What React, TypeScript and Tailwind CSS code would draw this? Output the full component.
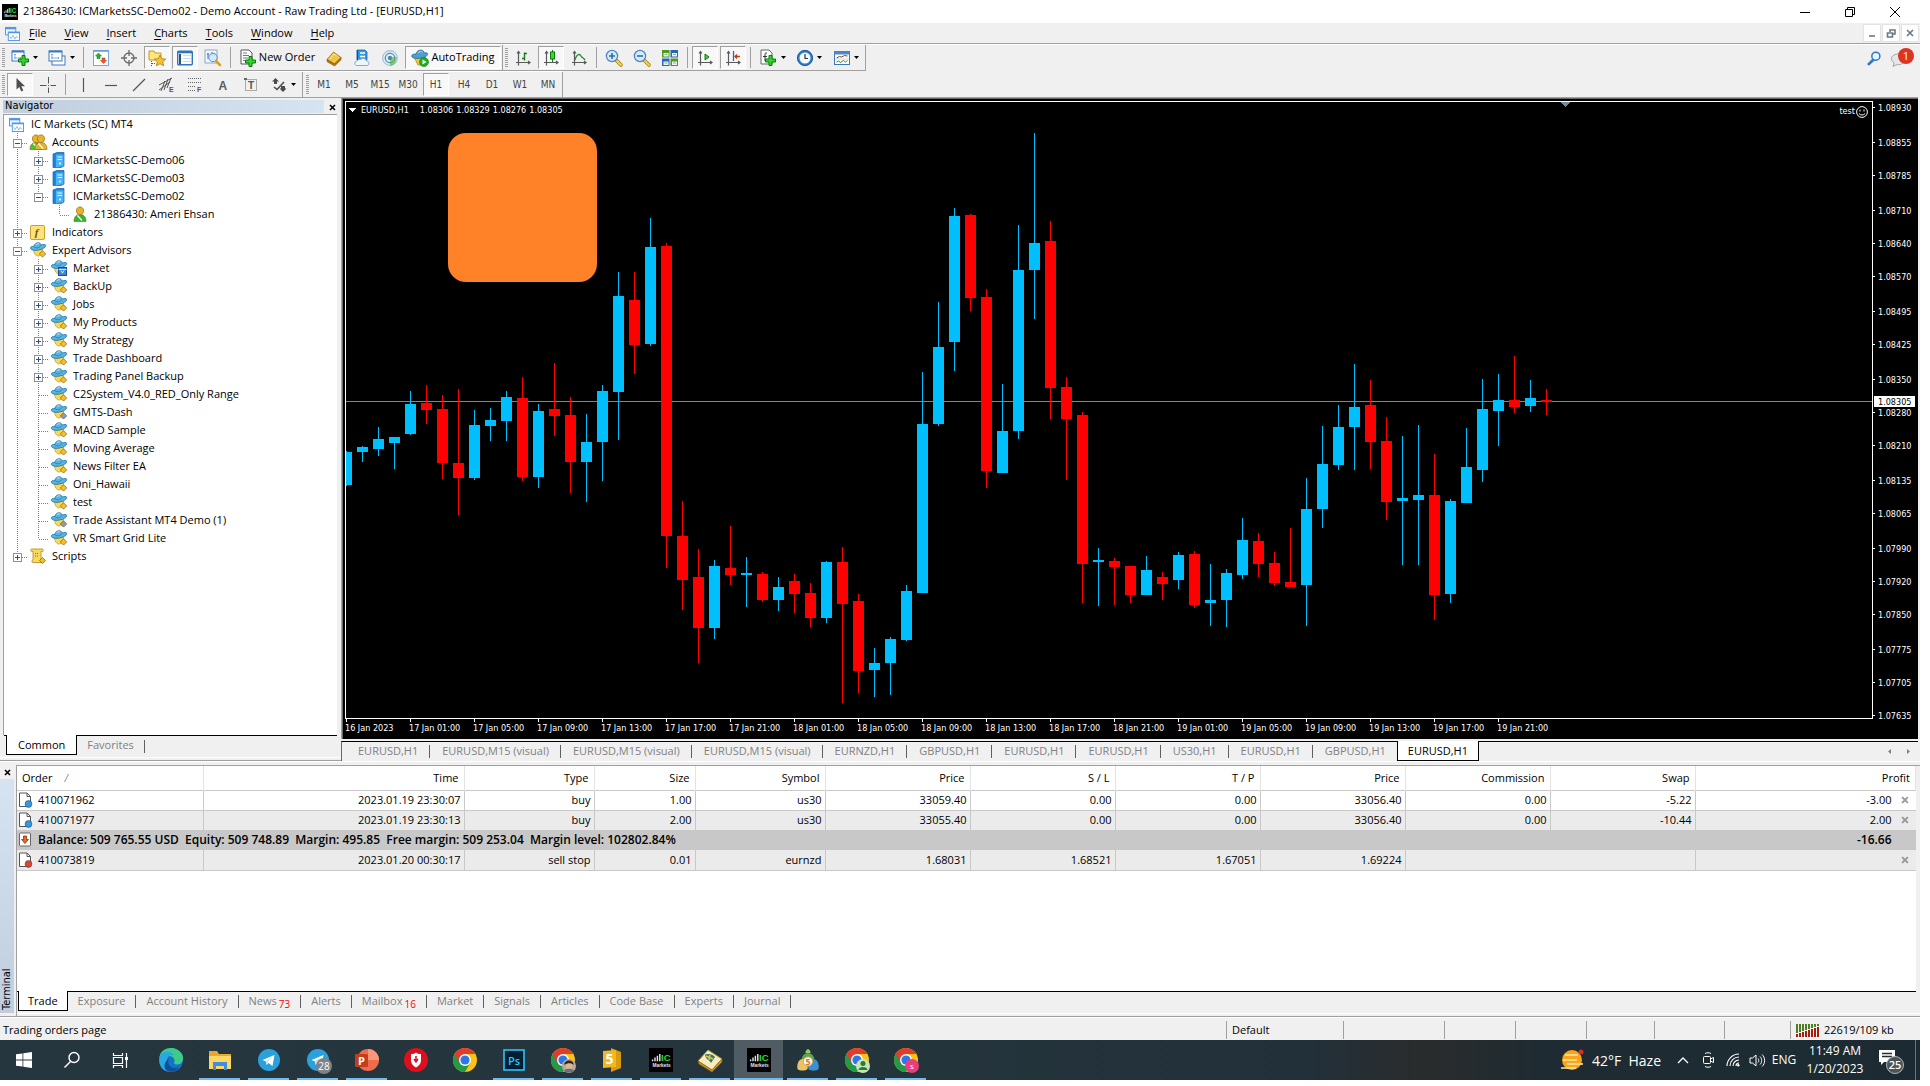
import React from "react";
import clsx from "clsx";

const UI = "font-['Open_Sans','Noto_Sans',sans-serif]";
const TAHOMA = "font-['DejaVu_Sans_Condensed','DejaVu_Sans',sans-serif]";

type IconProps = { children: React.ReactNode; size?: number; box?: number; className?: string };

const Icon = ({ children, size = 16, box = 16, className }: IconProps) => (
  <svg width={size} height={size} viewBox={`0 0 ${box} ${box}`} className={clsx("shrink-0 overflow-visible", className)} aria-hidden="true">
    {children}
  </svg>
);

const GreenPlus = ({ x = 5, y = 5 }: { x?: number; y?: number }) => (
  <path
    transform={`translate(${x} ${y})`}
    d="M4 .5h3V4h3.5v3H7v3.500H4V7H.5V4H4z"
    fill="#2fd52f"
    stroke="#0b7a0b"
    strokeWidth="1"
  />
);

const IcLogo = ({ size = 16 }: { size?: number }) => (
  <Icon size={size} box={20}>
    <rect width="20" height="20" fill="#000" />
    <path d="M3 9.500v1.500M5 8v3M7 6.500V11M9 5v6" stroke="#e5e5e5" strokeWidth="1.200" />
    <text x="10" y="11" fontSize="8" fontWeight="bold" fill="#1fdc2c" fontFamily="Liberation Sans">IC</text>
    <text x="3" y="16" fontSize="4" fontWeight="bold" fill="#e5e5e5" fontFamily="Liberation Sans">Markets</text>
  </Icon>
);

const WindowsIcon = ({ size = 15 }: { size?: number }) => (
  <Icon size={size}>
    <rect x=".5" y="1.500" width="11" height="8" fill="#eaf4ff" stroke="#4f96e8" />
    <path d="M.5 2.500h11" stroke="#4f96e8" strokeWidth="2" />
    <rect x="3.500" y="6.500" width="12" height="9" fill="#fff" stroke="#4f96e8" />
    <path d="M3.500 7h12" stroke="#4f96e8" strokeWidth="1.500" />
    <path d="M5 11l1.500 2.500L8.500 10l2 4 1.500-3 1.500 2" fill="none" stroke="#8ab6ee" />
  </Icon>
);

/* ---------- toolbar glyphs ---------- */

const NewChartIcon = () => (
  <Icon size={18} box={18}>
    <rect x="1" y="2" width="12" height="10" fill="#fff" stroke="#3f77bd" />
    <path d="M1 2.500h12" stroke="#3f77bd" strokeWidth="2" />
    <path d="M4 5v5M3 6l1-1 1 1M3 9h7M9 8l1 1-1 1" stroke="#6d9bd1" fill="none" strokeWidth=".8" />
    <GreenPlus x={7} y={6} />
  </Icon>
);
const ProfilesIcon = () => (
  <Icon size={18} box={18}>
    <rect x="4" y="7" width="13" height="9" fill="#fff" stroke="#3f77bd" />
    <rect x="1" y="2" width="13" height="10" fill="#fff" stroke="#3f77bd" />
    <path d="M1 2.500h13" stroke="#3f77bd" strokeWidth="2" />
    <path d="M4 5v5M3 6l1-1 1 1M3 9h8M10 8l1 1-1 1" stroke="#6d9bd1" fill="none" strokeWidth=".8" />
  </Icon>
);
const MarketWatchIcon = () => (
  <Icon>
    <rect x=".5" y=".5" width="15" height="15" fill="#fff" stroke="#7aa6da" />
    <path d="M.5 1h15" stroke="#5f9adf" strokeWidth="1.500" />
    <path d="M5.500 3l3 3H7v2.500H4V6H2.500z" fill="#21b821" stroke="#0b7a0b" strokeWidth=".5" />
    <path d="M10.500 13.500l3-3H12V8H9v2.500H7.500z" fill="#f0562a" stroke="#b1300f" strokeWidth=".5" />
  </Icon>
);
const TargetIcon = () => (
  <Icon>
    <circle cx="8" cy="8" r="5" fill="none" stroke="#6b6b6b" strokeWidth="1.300" />
    <path d="M8 0v6M8 10v6M0 8h6M10 8h6" stroke="#6b6b6b" strokeWidth="1.300" />
  </Icon>
);
const StarFolderIcon = () => (
  <Icon size={18} box={18}>
    <path d="M1 2h5l1 2h6v7H1z" fill="#ffe680" stroke="#c69a1d" />
    <path d="M3.500 12v5M4 14.500h4" stroke="#555" strokeDasharray="1 1" />
    <path d="M12 6l1.700 3.700 4 .4-3 2.700.9 4L12 14.700 8.400 16.800l.9-4-3-2.700 4-.4z" fill="#f7c331" stroke="#a97a10" strokeWidth=".8" />
  </Icon>
);
const PanelIcon = () => (
  <Icon>
    <rect x=".7" y="1.200" width="14.600" height="13.600" rx="1" fill="#fff" stroke="#2f74bd" strokeWidth="1.400" />
    <path d="M1 2.500h14" stroke="#2f74bd" strokeWidth="1.600" />
    <path d="M2 4h2v10H2z" fill="#26527f" />
    <path d="M6 5.500h8M6 8.500h8M6 11.500h8" stroke="#c4def5" />
  </Icon>
);
const TesterIcon = () => (
  <Icon size={18} box={18}>
    <rect x="1" y="1" width="12" height="13" fill="#eef5fc" stroke="#89aacb" />
    <path d="M4 4v6M3 5h2M8 3v4M10.500 4v3" stroke="#3a77b5" />
    <circle cx="9" cy="8.500" r="4.200" fill="#cfe6fb" fillOpacity=".85" stroke="#6a91b8" />
    <path d="M12 12l4 4" stroke="#d7a427" strokeWidth="2.600" strokeLinecap="round" />
  </Icon>
);
const NewOrderIcon = () => (
  <Icon size={18} box={18}>
    <path d="M2 1h8l3 3v11H2z" fill="#fff" stroke="#555" />
    <path d="M4 4h4M4 6.500h6M4 9h5M4 11.500h3" stroke="#777" />
    <GreenPlus x={6} y={7} />
  </Icon>
);
const BookIcon = () => (
  <Icon>
    <path d="M1 9.500L7.500 2 15 7.500 8.500 14z" fill="#f3c545" stroke="#9b6b10" strokeWidth=".8" />
    <path d="M1 9.500l.2 2.300L8.700 16 15 9.700V7.500L8.500 14z" fill="#b9780e" stroke="#7c4f07" strokeWidth=".6" />
    <path d="M4 9l4-5 3 2" stroke="#ffe9a3" fill="none" />
  </Icon>
);
const CloudServerIcon = () => (
  <Icon>
    <path d="M3 0h8l2 2v8H3z" fill="#2f9bea" stroke="#1668b4" strokeWidth=".8" />
    <path d="M3.500 0v10" stroke="#0f4f92" strokeWidth="1.200" />
    <path d="M6 3h5M6 6.500h5" stroke="#fff" strokeWidth="1.400" />
    <path d="M2.500 15.500a2.300 2.300 0 01.5-4.500 3 3 0 013.500-1.500 3.500 3.500 0 016 1.500 2.300 2.300 0 01.8 4.500z" fill="#eef5fb" stroke="#7ba3cc" strokeWidth=".9" />
  </Icon>
);
const SignalIcon = () => (
  <Icon>
    <path d="M5 14.500A7 7 0 115 1.500" fill="none" stroke="#9cc3de" strokeWidth="0" />
    <circle cx="8" cy="8" r="7.300" fill="none" stroke="#9cc3de" strokeWidth="1.200" />
    <circle cx="8" cy="8" r="4.700" fill="none" stroke="#4f94c8" strokeWidth="1.400" />
    <circle cx="8" cy="8" r="2.200" fill="#3c86c2" />
    <path d="M8 7v9c5-1 7-5 6.500-9z" fill="#55b03a" opacity=".6" />
  </Icon>
);
const AutoTradingIcon = () => (
  <Icon size={18} box={18}>
    <path d="M3 8h11l-3 8H7z" fill="#f5c431" stroke="#b7861a" strokeWidth=".8" />
    <path d="M1 8c-1-3 2-3 4-3C6 0 13 0 13 4c2-.5 4-.5 3.500 1.500C16 9 4 11 1 8z" fill="#4c9fd0" stroke="#236d9b" strokeWidth=".8" />
    <path d="M7 4c1-2 4-2 4.500-.5" fill="none" stroke="#bfe4f6" />
    <circle cx="13" cy="13" r="4.500" fill="#1fae1f" stroke="#0b7a0b" strokeWidth=".6" />
    <path d="M11.500 10.500v5l4-2.500z" fill="#fff" />
  </Icon>
);
const Axes = () => <path d="M3.500 2v13.500M1 12.500h14M2 3.500l1.500-2 1.500 2M13 11l2 1.500-2 1.500" stroke="#5a5a5a" strokeWidth="1.200" fill="none" />;
const BarChartIcon = () => (
  <Icon><Axes /><path d="M9.500 2.500v8M7 8.500h2.500M9.500 3.500H12" stroke="#1c7a1c" strokeWidth="1.400" /></Icon>
);
const CandleIcon = () => (
  <Icon>
    <Axes />
    <path d="M9.500 0v12" stroke="#0b7a0b" />
    <rect x="7.500" y="2" width="4" height="7" fill="#3fd53f" stroke="#0b7a0b" />
  </Icon>
);
const LineIcon = () => (
  <Icon><Axes /><path d="M4 10c2-7 5-6 6-4s3 2 4 4" stroke="#2c8c2c" strokeWidth="1.300" fill="none" /></Icon>
);
const ZoomIcon = ({ plus }: { plus?: boolean }) => (
  <Icon size={18} box={18}>
    <path d="M11 11l5 5" stroke="#a97a10" strokeWidth="3.600" strokeLinecap="round" />
    <path d="M11 11l5 5" stroke="#f4cf52" strokeWidth="2.200" strokeLinecap="round" />
    <circle cx="7" cy="7" r="5.600" fill="#d4eafb" stroke="#4a86bf" strokeWidth="1.300" />
    <path d={plus ? "M7 4v6M4 7h6" : "M4 7h6"} stroke="#2f6da8" strokeWidth="1.600" />
  </Icon>
);
const TilesIcon = () => (
  <Icon>
    <path d="M0 0h7.500v7.500H0zM8.500 8.500H16V16H8.500z" fill="#4f9a1c" />
    <path d="M8.500 0H16v7.500H8.500zM0 8.500h7.500V16H0z" fill="#2767b8" />
    <path d="M1.500 3h5v3.500h-5zM10 3h5v3.500h-5zM1.500 11.500h5V15h-5zM10 11.500h5V15h-5z" fill="#eef5ff" />
    <path d="M2.500 4.500h3M11 4.500h3M2.500 13h3M11 13h3" stroke="#8bb37a" />
  </Icon>
);
const ScrollIcon = () => (
  <Icon><Axes /><path d="M8 4l4 3-4 3z" fill="#3fd53f" stroke="#0b7a0b" /></Icon>
);
const ShiftIcon = () => (
  <Icon><Axes /><path d="M8.500 1v10" stroke="#2767b8" strokeWidth="1.300" /><path d="M15 6.500H10M12 4.500l-2 2 2 2" stroke="#b5400f" strokeWidth="1.300" fill="none" /></Icon>
);
const IndicatorsIcon = () => (
  <Icon size={18} box={18}>
    <path d="M2 1h8l3 3v11H2z" fill="#fff" stroke="#666" />
    <path d="M8 4c-2-.5-2 1-2 2v6M4 7.500h4" stroke="#333" fill="none" />
    <GreenPlus x={6} y={6} />
  </Icon>
);
const ClockIcon = () => (
  <Icon>
    <circle cx="8" cy="8" r="6.700" fill="#f3f9ff" stroke="#2f7fd0" strokeWidth="2.400" />
    <circle cx="8" cy="8" r="7.600" fill="none" stroke="#164b88" strokeWidth=".8" />
    <path d="M8 4v4.500h3" stroke="#333" fill="none" strokeWidth="1.200" />
  </Icon>
);
const TemplateIcon = () => (
  <Icon>
    <rect x=".5" y="1.500" width="15" height="13" fill="#fff" stroke="#3f77bd" />
    <path d="M.5 3h15" stroke="#4a88d0" strokeWidth="3" />
    <path d="M2.500 8l3-1.500 2 .5 3-1.500 3 .5" stroke="#9c3b16" fill="none" />
    <path d="M2.500 12l2-1 2 1.500 3-2 2 1.500 2-1.500" stroke="#2c8c2c" fill="none" />
    <path d="M1 9h14" stroke="#c5d9ef" />
  </Icon>
);

const CursorIcon = () => (
  <Icon><path d="M4.500 1v11.500l2.800-2.600 2 4.600 2-1-2-4.300h3.700z" fill="#4d4d4d" /></Icon>
);
const CrosshairIcon = () => (
  <Icon><path d="M8.500 0v6.500M8.500 10.500V16M0 8.500h6.500M10.500 8.500H16" stroke="#555" /><path d="M8 8h1v1H8z" fill="#555" /></Icon>
);
const VLineIcon = () => <Icon><path d="M8.500 1v14" stroke="#555" strokeWidth="1.200" /></Icon>;
const HLineIcon = () => <Icon><path d="M2 8.500h12" stroke="#555" strokeWidth="1.200" /></Icon>;
const TrendIcon = () => <Icon><path d="M2 14L14 2" stroke="#555" strokeWidth="1.200" /></Icon>;
const ChannelIcon = () => (
  <Icon>
    <path d="M0 8l13-7M0 13l11-8M2 14L6 4M5 13L9 2M8 11l4-10" stroke="#555" fill="none" />
    <text x="10" y="15" fontSize="7" fontWeight="bold" fill="#555" fontFamily="Liberation Sans">E</text>
  </Icon>
);
const FiboIcon = () => (
  <Icon>
    <path d="M1 1.500h14M1 5.500h14M1 9.500h8M1 13.500h8" stroke="#666" strokeDasharray="1 1" />
    <text x="10" y="15" fontSize="7" fontWeight="bold" fill="#555" fontFamily="Liberation Sans">F</text>
  </Icon>
);
const TextIcon = () => (
  <Icon><text x="3.500" y="13" fontSize="12" fontWeight="bold" fill="#5a5a5a" fontFamily="Liberation Sans">A</text></Icon>
);
const LabelIcon = () => (
  <Icon>
    <rect x="2.500" y="2.500" width="11" height="11" fill="none" stroke="#666" strokeDasharray="1 1" />
    <path d="M1 1h3v2H1z" fill="#666" />
    <text x="5" y="12" fontSize="10" fontWeight="bold" fill="#555" fontFamily="Liberation Sans">T</text>
  </Icon>
);
const ArrowsIcon = () => (
  <Icon>
    <path d="M4.500 1L8 4.500H6V7H3V4.500H1zM12 15l-3.500-3.500H10V9h4v2.500h1.500z" fill="#4d4d4d" />
    <path d="M3 10l3 2.500L13 5" stroke="#4d4d4d" strokeWidth="1.600" fill="none" />
  </Icon>
);

/* ---------- toolbar parts ---------- */

const Caret = () => (
  <svg width="5" height="3" viewBox="0 0 5 3" className="shrink-0" aria-hidden="true"><path d="M0 0h5L2.500 3z" fill="#000" /></svg>
);

const Grip = () => (
  <div className="my-[3px] mr-px ml-[2px] w-[3px] self-stretch bg-[repeating-linear-gradient(#a0a0a0_0_1px,#f0f0f0_1px_2px)]" />
);

const Sep = () => (
  <div className="flex w-[7px] justify-center self-stretch py-[2px]"><div className="w-px bg-[#a0a0a0]" /></div>
);

type ToolProps = { label: string; pressed?: boolean; wide?: boolean; className?: string; children: React.ReactNode };

const Tool = ({ label, pressed, wide, className, children }: ToolProps) => (
  <button
    aria-label={label}
    aria-pressed={pressed}
    className={clsx(
      "mx-px my-px flex items-center justify-center self-stretch border",
      !wide && "w-[26px]",
      pressed ? "border-t-[#a0a0a0] border-l-[#a0a0a0] border-r-white border-b-white bg-[#f8f8f8]" : "border-transparent",
      className,
    )}
  >
    {children}
  </button>
);

const DropTool = ({ label, children }: { label: string; children: React.ReactNode }) => (
  <button aria-label={label} className="flex w-[37px] items-center justify-center gap-[4px]">
    {children}
    <Caret />
  </button>
);

const Group = ({ children }: { children: React.ReactNode }) => (
  <div className="flex h-[26px] items-center border-r border-b border-[#a0a0a0]">{children}</div>
);

const frames = ["M1", "M5", "M15", "M30", "H1", "H4", "D1", "W1", "MN"];

const Toolbars = () => (
  <div className="flex items-start justify-between border-t border-white">
    <div className="flex flex-col items-start">
      <div className="flex">
        <Group>
          <Grip />
          <DropTool label="New chart"><NewChartIcon /></DropTool>
          <DropTool label="Profiles"><ProfilesIcon /></DropTool>
          <Sep />
          <Tool label="Market Watch"><MarketWatchIcon /></Tool>
          <Tool label="Data Window"><TargetIcon /></Tool>
          <Tool label="Navigator" pressed><StarFolderIcon /></Tool>
          <Tool label="Terminal" pressed><PanelIcon /></Tool>
          <Tool label="Strategy Tester"><TesterIcon /></Tool>
          <Sep />
          <Tool label="New Order" wide className="w-[84px] gap-[2px] text-[11px]"><NewOrderIcon />New Order</Tool>
          <Tool label="MetaEditor"><BookIcon /></Tool>
          <Tool label="Virtual hosting"><CloudServerIcon /></Tool>
          <Tool label="Signals"><SignalIcon /></Tool>
          <Tool label="AutoTrading" wide pressed className="w-[96px] gap-[2px] text-[11px]"><AutoTradingIcon />AutoTrading</Tool>
        </Group>
        <Group>
          <Grip />
          <Tool label="Bar chart"><BarChartIcon /></Tool>
          <Tool label="Candlesticks" pressed><CandleIcon /></Tool>
          <Tool label="Line chart"><LineIcon /></Tool>
          <Sep />
          <Tool label="Zoom in"><ZoomIcon plus /></Tool>
          <Tool label="Zoom out"><ZoomIcon /></Tool>
          <Tool label="Tile windows"><TilesIcon /></Tool>
          <Sep />
          <Tool label="Auto scroll" pressed><ScrollIcon /></Tool>
          <Tool label="Chart shift" pressed><ShiftIcon /></Tool>
          <Sep />
          <DropTool label="Indicators"><IndicatorsIcon /></DropTool>
          <DropTool label="Periods"><ClockIcon /></DropTool>
          <DropTool label="Templates"><TemplateIcon /></DropTool>
        </Group>
      </div>
      <div className="flex border-t border-white">
        <div className="flex h-[25px] items-center border-r border-[#a0a0a0]">
          <Grip />
          <Tool label="Cursor" pressed><CursorIcon /></Tool>
          <Tool label="Crosshair"><CrosshairIcon /></Tool>
          <Sep />
          <Tool label="Vertical line"><VLineIcon /></Tool>
          <Tool label="Horizontal line"><HLineIcon /></Tool>
          <Tool label="Trendline"><TrendIcon /></Tool>
          <Tool label="Equidistant channel"><ChannelIcon /></Tool>
          <Tool label="Fibonacci"><FiboIcon /></Tool>
          <Tool label="Text"><TextIcon /></Tool>
          <Tool label="Text label"><LabelIcon /></Tool>
          <DropTool label="Arrows"><ArrowsIcon /></DropTool>
        </div>
        <div className={clsx("flex h-[25px] items-center border-r border-[#a0a0a0] pl-px text-[10px] text-[#444]", TAHOMA)}>
          <Grip />
          {frames.map((f) => (
            <Tool key={f} label={f} pressed={f === "H1"}>{f}</Tool>
          ))}
        </div>
      </div>
    </div>
    <div className="flex items-center gap-2 pt-[2px] pr-[5px]">
      <button aria-label="Search">
        <Icon size={15}>
          <path d="M8 9L3 14" stroke="#2a78d0" strokeWidth="3" strokeLinecap="round" />
          <circle cx="10.500" cy="5.500" r="4.300" fill="#eaf5ff" stroke="#2a78d0" strokeWidth="1.600" />
        </Icon>
      </button>
      <button aria-label="Messages">
        <svg width="26" height="22" viewBox="0 0 26 22" aria-hidden="true">
          <path d="M4 19.500l1-3.500C-.5 11 4 7 9 7s8 4 6 7.500S9 18 8 17.500z" fill="#e3e6ea" stroke="#a3a8ad" />
          <circle cx="17" cy="9" r="8" fill="#dd3322" />
          <text x="17" y="13" fontSize="11" textAnchor="middle" fill="#fff" fontFamily="Open Sans">1</text>
        </svg>
      </button>
    </div>
  </div>
);

/* ---------- title bar and menu ---------- */

const TitleBar = () => (
  <header className="flex h-[23px] items-center justify-between bg-white">
    <div className="flex items-center gap-[5px] pl-[2px]">
      <IcLogo size={16} />
      <h1 className="text-[11px]">21386430: ICMarketsSC-Demo02 - Demo Account - Raw Trading Ltd - [EURUSD,H1]</h1>
    </div>
    <div className="flex pr-[3px]">
      <button aria-label="Minimize" className="flex w-[45px] justify-center"><Icon size={12} box={12}><path d="M1 6.500h10" stroke="#000" /></Icon></button>
      <button aria-label="Restore" className="flex w-[45px] justify-center">
        <Icon size={12} box={12}><path d="M1.500 3.500h7v7h-7zM3.500 3.500v-2h7v7h-2" fill="none" stroke="#000" /></Icon>
      </button>
      <button aria-label="Close" className="flex w-[45px] justify-center"><Icon size={12} box={12}><path d="M1 1l10 10M11 1L1 11" stroke="#000" /></Icon></button>
    </div>
  </header>
);

const menus = ["File", "View", "Insert", "Charts", "Tools", "Window", "Help"];

const mdiGlyphs = [
  { label: "Minimize chart", d: "M2 8h6" },
  { label: "Restore chart", d: "M1.500 5h5v4h-5zM4 4V2h5v4H7" },
  { label: "Close chart", d: "M2 2l6 6M8 2L2 8" },
];

const MenuBar = () => (
  <nav className="flex h-[21px] items-center justify-between border-b border-[#a0a0a0] pr-px">
    <div className="flex items-center pl-[5px]">
      <WindowsIcon />
      {menus.map((m) => (
        <button key={m} className="px-[9px] text-[11px]">
          <span className="underline underline-offset-2">{m[0]}</span>
          {m.slice(1)}
        </button>
      ))}
    </div>
    <div className="flex gap-px">
      {mdiGlyphs.map((g) => (
        <button key={g.label} aria-label={g.label} className="flex h-[18px] w-[18px] items-center justify-center border border-[#e3e3e3] bg-white">
          <Icon size={10} box={10}><path d={g.d} fill="none" stroke="#66788c" strokeWidth="1.600" /></Icon>
        </button>
      ))}
    </div>
  </nav>
);

/* ---------- navigator ---------- */

const UserShape = ({ x = 0, body }: { x?: number; body: string }) => (
  <g transform={`translate(${x} 0)`}>
    <path d="M0 15.500c0-4 1.500-7 6-7s6 3 6 7z" fill={body} stroke="#7a6a10" strokeWidth=".6" />
    <path d="M2.500 5c-.5-5.500 7.500-5.500 7 0 0 5-7 5-7 0z" fill="#e7b32a" stroke="#94690b" strokeWidth=".7" />
    <path d="M3.500 9.500l4.500 5" stroke="#fff" strokeWidth="1.300" />
  </g>
);

const AccountsIcon = () => (
  <Icon size={17} box={17}><UserShape body="#4cc22c" /><UserShape x={5} body="#e7b32a" /></Icon>
);
const ServerIcon = () => (
  <Icon>
    <path d="M2 2l4-1.500h7V14l-3 1.500H2z" fill="#1c86dc" stroke="#0f62a8" strokeWidth=".7" />
    <path d="M5 2.500h7.500V14L5 15.500z" fill="#4cb4f4" />
    <path d="M6.500 5h4.500M6.500 7.500h4.500" stroke="#e9f7ff" strokeWidth="1.200" />
    <circle cx="9" cy="11.500" r="1" fill="#fff" />
  </Icon>
);
const UserIcon = () => <Icon><g transform="translate(2 0)"><UserShape body="#2fb82f" /></g></Icon>;
const FunctionIcon = () => (
  <Icon size={15}>
    <rect x=".5" y=".5" width="15" height="15" rx="1.500" fill="#ffe27a" stroke="#c39a1b" />
    <text x="5" y="12" fontSize="12" fontStyle="italic" fontWeight="bold" fill="#6d5208" fontFamily="Liberation Serif">f</text>
  </Icon>
);
const ExpertIcon = ({ gray, bag }: { gray?: boolean; bag?: boolean }) => (
  <Icon>
    <path d="M3.500 7h9c.5 4-2 7-4.500 7s-4.500-3-4.500-7z" fill="#fbd850" stroke="#c09518" strokeWidth=".7" />
    <path d="M.3 6.500C0 4.500 2.500 4.300 4 4.300 4.500 0 10.500-.5 11 3c2-.6 4.800-1 4.700.6C15.500 7.500 2.500 10.500.3 6.500z" fill="#58b4e2" stroke="#20709f" strokeWidth=".8" />
    <path d="M4 4.800c2 1.800 5.500 1 7-1.300" stroke="#20709f" strokeWidth=".7" fill="none" />
    <path d="M6 2.800c.8-1.300 2.500-1.300 3-.6" stroke="#c8eafa" fill="none" />
    {bag ? (
      <g><rect x="7.500" y="7.500" width="8" height="8" fill="#3d86dd" stroke="#17509a" /><path d="M10 10.500l1.500 2.500 1.500-2.500M7.500 9.500h8" stroke="#fff" strokeWidth=".8" fill="none" /></g>
    ) : (
      <path d="M12.500 8.700l3.200 3.200-3.200 3.200-3.200-3.200z" fill={gray ? "#9a9a9a" : "#f2c033"} stroke={gray ? "#5f5f5f" : "#92690c"} strokeWidth=".8" />
    )}
  </Icon>
);
const ScriptIcon = () => (
  <Icon>
    <path d="M1.500 1h11c1 0 1 2.500 0 2.500H11V12h2v2.500H3c-1.500 0-1.500-2.500 0-2.500V3.500H1.500C.5 3.500.5 1 1.500 1z" fill="#f8d95f" stroke="#b08a16" strokeWidth=".8" />
    <path d="M5 5.500h4M5 8h4" stroke="#8e6e0e" strokeDasharray="1 1" />
    <path d="M12.500 9.500l3 3-3 3-3-3z" fill="#f2c033" stroke="#92690c" strokeWidth=".8" />
  </Icon>
);

// guides holds one character per column: "|" line, "L" last elbow, "T" branch, " " blank
type Row = { label: string; guides: string; box?: "+" | "-"; icon: React.ReactNode };

const rows: Row[] = [
  { label: "IC Markets (SC) MT4", guides: "", icon: <WindowsIcon size={15} /> },
  { label: "Accounts", guides: "T", box: "-", icon: <AccountsIcon /> },
  { label: "ICMarketsSC-Demo06", guides: "|T", box: "+", icon: <ServerIcon /> },
  { label: "ICMarketsSC-Demo03", guides: "|T", box: "+", icon: <ServerIcon /> },
  { label: "ICMarketsSC-Demo02", guides: "|L", box: "-", icon: <ServerIcon /> },
  { label: "21386430: Ameri Ehsan", guides: "| L", icon: <UserIcon /> },
  { label: "Indicators", guides: "T", box: "+", icon: <FunctionIcon /> },
  { label: "Expert Advisors", guides: "T", box: "-", icon: <ExpertIcon /> },
  { label: "Market", guides: "|T", box: "+", icon: <ExpertIcon bag /> },
  { label: "BackUp", guides: "|T", box: "+", icon: <ExpertIcon /> },
  { label: "Jobs", guides: "|T", box: "+", icon: <ExpertIcon /> },
  { label: "My Products", guides: "|T", box: "+", icon: <ExpertIcon /> },
  { label: "My Strategy", guides: "|T", box: "+", icon: <ExpertIcon /> },
  { label: "Trade Dashboard", guides: "|T", box: "+", icon: <ExpertIcon /> },
  { label: "Trading Panel Backup", guides: "|T", box: "+", icon: <ExpertIcon /> },
  { label: "C2System_V4.0_RED_Only Range", guides: "|T", icon: <ExpertIcon /> },
  { label: "GMTS-Dash", guides: "|T", icon: <ExpertIcon gray /> },
  { label: "MACD Sample", guides: "|T", icon: <ExpertIcon /> },
  { label: "Moving Average", guides: "|T", icon: <ExpertIcon /> },
  { label: "News Filter EA", guides: "|T", icon: <ExpertIcon /> },
  { label: "Oni_Hawaii", guides: "|T", icon: <ExpertIcon /> },
  { label: "test", guides: "|T", icon: <ExpertIcon /> },
  { label: "Trade Assistant MT4 Demo (1)", guides: "|T", icon: <ExpertIcon gray /> },
  { label: "VR Smart Grid Lite", guides: "|L", icon: <ExpertIcon /> },
  { label: "Scripts", guides: "L", box: "+", icon: <ScriptIcon /> },
];

const Guide = ({ kind, box }: { kind: string; box?: string }) => (
  <svg width="21" height="18" viewBox="0 0 21 18" className="shrink-0" aria-hidden="true">
    {kind !== " " && <path d={kind === "L" ? "M10.500 0v10" : "M10.500 0v18"} stroke="#808080" strokeDasharray="1 1" />}
    {(kind === "T" || kind === "L") && <path d="M11 10.500h10" stroke="#808080" strokeDasharray="1 1" />}
    {box && (
      <g>
        <rect x="6.500" y="6.500" width="8" height="8" fill="#fff" stroke="#919191" />
        <path d={box === "+" ? "M8 10.500h5M10.500 8v5" : "M8 10.500h5"} stroke="#2b4f9e" />
      </g>
    )}
  </svg>
);

const Navigator = () => (
  <aside className="flex w-[341px] shrink-0 flex-col border-t border-[#a0a0a0] pt-[2px]">
    <div className="flex h-[14px] items-start pr-px pl-[3px]">
      <h2 className={clsx("flex-1 bg-linear-to-r from-[#bfcddd] to-[#d6e4f2] pb-px pl-[2px] text-[11px] leading-[12px]", TAHOMA)}>Navigator</h2>
      <button aria-label="Close navigator" className="flex h-[14px] w-[16px] items-center justify-center">
        <Icon size={7} box={7}><path d="M1 1l5 5M6 1L1 6" stroke="#000" strokeWidth="1.600" /></Icon>
      </button>
    </div>
    <ul className="mr-[4px] ml-[3px] flex-1 border-t border-l border-[#a0a0a0] bg-white pl-[3px] text-[11px]">
      {rows.map((r) => (
        <li key={r.label} className="flex h-[18px] items-center leading-[18px]">
          {r.guides.split("").map((g, i) => (
            <Guide key={i} kind={g} box={i === r.guides.length - 1 ? r.box : undefined} />
          ))}
          <span className="flex w-[24px] shrink-0 pl-[2px]">{r.icon}</span>
          {r.label}
        </li>
      ))}
    </ul>
    <div className="mr-[4px] ml-[4px] flex h-[22px] items-start border-t border-black pl-[2px] text-[11px]">
      <button className="-mt-px h-[20px] border border-t-0 border-black bg-white px-[11px] leading-[18px]">Common</button>
      <button className="px-[10px] leading-[18px] text-[#808080]">Favorites</button>
      <span className="mt-[4px] h-[13px] w-px bg-[#606060]" />
    </div>
    <div className="h-[4px] border-t border-b border-t-white border-b-[#a0a0a0]" />
  </aside>
);

/* ---------- chart ---------- */

const PLOT_TOP = 102;
const STEP = 16;
const UP = "#00bfff";
const DOWN = "#ff0000";

// direction, high, body top, body bottom, low (window rows)
const candles: [string, number, number, number, number][] = [
  ["u", 451, 452, 485, 486], ["u", 446, 447, 452, 462], ["u", 427, 439, 449, 456], ["u", 437, 437, 443, 469],
  ["u", 391, 404, 434, 435], ["d", 385, 403, 410, 424], ["d", 395, 409, 463, 479], ["d", 389, 463, 478, 515],
  ["u", 410, 425, 478, 480], ["u", 408, 420, 426, 441], ["u", 391, 397, 421, 441], ["d", 377, 398, 477, 481],
  ["u", 404, 411, 477, 488], ["d", 363, 409, 416, 436], ["d", 397, 415, 462, 493], ["u", 414, 442, 462, 502],
  ["u", 385, 391, 442, 481], ["u", 272, 296, 392, 440], ["d", 272, 300, 345, 374], ["u", 218, 247, 344, 346],
  ["d", 243, 246, 536, 568], ["d", 501, 536, 580, 610], ["d", 549, 577, 628, 663], ["u", 560, 566, 628, 639],
  ["d", 526, 568, 575, 585], ["u", 557, 573, 575, 607], ["d", 572, 574, 600, 602], ["u", 577, 587, 600, 611],
  ["d", 574, 581, 594, 613], ["d", 583, 593, 618, 627], ["u", 561, 562, 618, 623], ["d", 547, 562, 604, 703],
  ["d", 594, 601, 671, 693], ["u", 648, 663, 670, 697], ["u", 637, 639, 663, 695], ["u", 585, 591, 640, 641],
  ["u", 372, 424, 593, 593], ["u", 302, 347, 424, 426], ["u", 208, 216, 342, 371], ["d", 214, 215, 298, 311],
  ["d", 289, 297, 471, 488], ["u", 384, 431, 473, 473], ["u", 225, 270, 431, 439], ["u", 133, 243, 270, 319],
  ["d", 221, 241, 388, 419], ["d", 377, 387, 419, 480], ["d", 412, 415, 564, 603], ["u", 548, 560, 562, 606],
  ["d", 558, 561, 567, 605], ["d", 566, 566, 595, 603], ["u", 556, 570, 595, 595], ["d", 572, 577, 584, 600],
  ["u", 552, 555, 580, 589], ["d", 551, 554, 605, 608], ["u", 564, 600, 603, 626], ["u", 569, 573, 600, 627],
  ["u", 518, 540, 575, 579], ["d", 533, 541, 564, 577], ["d", 552, 563, 583, 586], ["d", 528, 582, 587, 587],
  ["u", 478, 509, 585, 626], ["u", 426, 464, 509, 528], ["u", 405, 427, 465, 470], ["u", 364, 407, 427, 470],
  ["d", 380, 405, 442, 469], ["d", 417, 441, 502, 520], ["u", 436, 498, 501, 565], ["u", 425, 495, 500, 565],
  ["d", 454, 495, 595, 620], ["u", 499, 501, 594, 603], ["u", 428, 467, 503, 503], ["u", 379, 409, 470, 482],
  ["u", 374, 400, 411, 446], ["d", 356, 400, 407, 413], ["u", 380, 398, 406, 412], ["d", 389, 400, 402, 415],
];

const prices = [
  108930, 108855, 108785, 108710, 108640, 108570, 108495, 108425, 108350, 108280,
  108210, 108135, 108065, 107990, 107920, 107850, 107775, 107705, 107635,
];

const times = [
  "16 Jan 2023", "17 Jan 01:00", "17 Jan 05:00", "17 Jan 09:00", "17 Jan 13:00", "17 Jan 17:00", "17 Jan 21:00",
  "18 Jan 01:00", "18 Jan 05:00", "18 Jan 09:00", "18 Jan 13:00", "18 Jan 17:00", "18 Jan 21:00",
  "19 Jan 01:00", "19 Jan 05:00", "19 Jan 09:00", "19 Jan 13:00", "19 Jan 17:00", "19 Jan 21:00",
];

const priceRow = (p: number) => Math.round(107 + (108930 - p) * 0.4695) - PLOT_TOP + 1;

const Chart = () => (
  <div className="border-t border-l border-[#a0a0a0]">
    <div className={clsx("grid grid-cols-[1fr_45px] border-t border-l border-[#696969] bg-black pt-[2px] pl-[2px] text-[9px] text-white", TAHOMA)}>
      <div className="relative h-[618px] overflow-hidden border border-white">
        <svg width="100%" height="616" className="block" shapeRendering="crispEdges" role="img" aria-label="EURUSD hourly candles">
          <rect x="0" y={401 - PLOT_TOP} width="100%" height="1" fill="#778899" />
          {candles.map(([dir, high, top, bottom, low], i) => (
            <g key={i} fill={dir === "u" ? UP : DOWN}>
              <rect x={i * STEP} y={high - PLOT_TOP} width="1" height={low - high} />
              <rect x={i * STEP - 5} y={top - PLOT_TOP} width="11" height={bottom - top} />
            </g>
          ))}
          <path d="M1214 0h11l-5.500 5z" fill="#778899" />
          <path d="M3 6h7l-3.500 4z" fill="#fff" />
        </svg>
        <p className="absolute top-[2px] left-[15px] flex gap-[11px] whitespace-pre">
          <span>EURUSD,H1</span>
          <span className="flex gap-[3px]">
            <span>1.08306</span>
            <span>1.08329</span>
            <span>1.08276</span>
            <span>1.08305</span>
          </span>
        </p>
        <div className="absolute top-[31px] left-[102px] h-[149px] w-[149px] rounded-[18px] bg-[#ff8228]" />
        <p className="absolute top-[3px] right-[4px] flex items-center gap-px">
          test
          <Icon size={12} box={12}>
            <circle cx="6" cy="6" r="5.400" fill="none" stroke="#fff" />
            <path d="M4 3.500v2M8 3.500v2M3 7.500c1.500 2 4.500 2 6 0" stroke="#fff" fill="none" />
          </Icon>
        </p>
      </div>
      <svg width="45" height="618" className="block overflow-visible" fill="#fff">
        {prices.map((p) => (
          <g key={p}>
            <rect x="0" y={priceRow(p)} width="2" height="1" />
            <text x="5" y={priceRow(p) + 4}>{(p / 100000).toFixed(5)}</text>
          </g>
        ))}
        <rect x="1" y="295" width="41" height="11" />
        <text x="5" y="304" fill="#000">1.08305</text>
      </svg>
      <svg width="100%" height="20" className="col-span-2 block" fill="#fff">
        {times.map((t, i) => (
          <g key={t}>
            <rect x={i * 64 + 1} y="0" width="1" height="3" />
            <text x={i * 64} y="12">{t}</text>
          </g>
        ))}
      </svg>
    </div>
  </div>
);

const chartTabs = [
  "EURUSD,H1", "EURUSD,M15 (visual)", "EURUSD,M15 (visual)", "EURUSD,M15 (visual)", "EURNZD,H1", "GBPUSD,H1",
  "EURUSD,H1", "EURUSD,H1", "US30,H1", "EURUSD,H1", "GBPUSD,H1",
];

const ChartTabs = () => (
  <div className="mt-[2px] flex h-[20px] items-start border-t border-l border-t-black border-l-[#696969] pl-[4px] text-[11px] leading-[18px] text-[#808080]">
    {chartTabs.map((t, i) => (
      <button key={i} className="flex items-center">
        <span className="pr-[11px] pl-[12px]">{t}</span>
        {i < chartTabs.length - 1 && <span className="h-[13px] w-px bg-[#606060]" />}
      </button>
    ))}
    <button className="-mt-px h-[20px] border border-t-0 border-black bg-white px-[10px] text-black">EURUSD,H1</button>
    <div className="ml-auto flex gap-[14px] self-center pr-[7px]">
      <button aria-label="Scroll tabs left"><Icon size={5} box={5}><path d="M4 0v5L1 2.500z" fill="#808080" /></Icon></button>
      <button aria-label="Scroll tabs right"><Icon size={5} box={5}><path d="M1 0v5l3-2.500z" fill="#808080" /></Icon></button>
    </div>
  </div>
);

/* ---------- terminal ---------- */

const columns = ["Order", "Time", "Type", "Size", "Symbol", "Price", "S / L", "T / P", "Price", "Commission", "Swap", "Profit"];

const open = [
  ["410071962", "2023.01.19 23:30:07", "buy", "1.00", "us30", "33059.40", "0.00", "0.00", "33056.40", "0.00", "-5.22", "-3.00"],
  ["410071977", "2023.01.19 23:30:13", "buy", "2.00", "us30", "33055.40", "0.00", "0.00", "33056.40", "0.00", "-10.44", "2.00"],
];
const pending = ["410073819", "2023.01.20 00:30:17", "sell stop", "0.01", "eurnzd", "1.68031", "1.68521", "1.67051", "1.69224", "", "", ""];

const OrderIcon = ({ dot }: { dot: string }) => (
  <Icon>
    <path d="M1.500 1h7.500l3.500 3.500v10h-11z" fill="#fff" stroke="#555" />
    <path d="M9 1v3.500h3.500" fill="none" stroke="#555" />
    <circle cx="10.500" cy="12" r="3.400" fill={dot} stroke="#33445a" strokeWidth=".6" />
  </Icon>
);

const OrderRow = ({ cells, dot, shaded }: { cells: string[]; dot: string; shaded?: boolean }) => (
  <tr className={clsx("h-[20px] border-b border-[#c8c8c8]", shaded && "bg-[#ebebeb]")}>
    {cells.map((c, i) => {
      if (i === 0)
        return (
          <td key={i} className="border-r border-[#c8c8c8] pl-px">
            <span className="flex items-center gap-[4px]"><OrderIcon dot={dot} />{c}</span>
          </td>
        );
      if (i === 11)
        return (
          <td key={i}>
            <span className="flex items-center justify-end gap-[9px] pr-[7px]">
              {c}
              <button aria-label={`Close order ${cells[0]}`}>
                <Icon size={8} box={7}><path d="M1 1l5 5M6 1L1 6" stroke="#9a9a9a" strokeWidth="1.800" /></Icon>
              </button>
            </span>
          </td>
        );
      return (
        <td key={i} className={clsx("pr-[3px] text-right", !(i === 9 && c === "") && "border-r border-[#c8c8c8]")}>{c}</td>
      );
    })}
  </tr>
);

const terminalTabs: { name: string; count?: number }[] = [
  { name: "Exposure" }, { name: "Account History" }, { name: "News", count: 73 }, { name: "Alerts" },
  { name: "Mailbox", count: 16 }, { name: "Market" }, { name: "Signals" }, { name: "Articles" },
  { name: "Code Base" }, { name: "Experts" }, { name: "Journal" },
];

const Terminal = () => (
  <section className="flex flex-1 border-t border-white pt-[3px]">
    <div className="flex w-[16px] flex-col items-start">
      <button aria-label="Close terminal" className="flex h-[14px] w-[14px] items-center justify-center">
        <Icon size={7} box={7}><path d="M1 1l5 5M6 1L1 6" stroke="#000" strokeWidth="1.600" /></Icon>
      </button>
      <h2 className={clsx("mb-[3px] w-[14px] flex-1 rotate-180 bg-linear-to-b from-[#bfcddd] to-[#d6e4f2] pt-[3px] text-[11px] leading-[14px] [writing-mode:vertical-rl]", TAHOMA)}>
        Terminal
      </h2>
    </div>
    <div className="flex flex-1 flex-col border-t border-l border-[#a0a0a0]">
      <div className="mr-[4px] flex-1 bg-white">
        <table className="w-full table-fixed border-collapse text-[11px] leading-[16px]">
          <colgroup>
            <col className="w-[186px]" />
            <col className="w-[261px]" />
            <col className="w-[130px]" />
            <col className="w-[101px]" />
            <col className="w-[130px]" />
            <col span={6} className="w-[145px]" />
            <col />
          </colgroup>
          <thead>
            <tr className="h-[24px] border-b border-[#c8c8c8]">
              {columns.map((c, i) => (
                <th key={i} scope="col" className={clsx("border-r border-[#e3e3e3] font-normal", i === 0 ? "pl-[5px] text-left" : "pr-[5px] text-right")}>
                  {c}
                  {i === 0 && <span className="pl-[12px] text-[10px] text-[#808080] italic">/</span>}
                </th>
              ))}
            </tr>
          </thead>
          <tbody>
            {open.map((cells, i) => (
              <OrderRow key={cells[0]} cells={cells} dot="#2f9be8" shaded={i === 1} />
            ))}
            <tr className="h-[20px] bg-[#c8c8c8] text-[12px] font-semibold">
              <td colSpan={11} className="pl-px">
                <span className="flex items-center gap-[4px] whitespace-pre">
                  <Icon>
                    <rect x="1.500" y="1" width="11" height="13" rx="1" fill="#fff" stroke="#666" />
                    <path d="M5.500 4h3v3.500h2L7 11.500 3.500 7.500h2z" fill="#e2672b" stroke="#8e3208" strokeWidth=".8" />
                  </Icon>
                  Balance: 509 765.55 USD  Equity: 509 748.89  Margin: 495.85  Free margin: 509 253.04  Margin level: 102802.84%
                </span>
              </td>
              <td className="pr-[24px] text-right">-16.66</td>
            </tr>
            <OrderRow cells={pending} dot="#e0452c" shaded />
          </tbody>
        </table>
      </div>
      <div className="mr-[4px] flex h-[22px] items-start border-t border-black pl-px text-[11px] leading-[18px] text-[#808080]">
        <button className="-mt-px h-[20px] border border-t-0 border-black bg-white px-[9px] text-black">Trade</button>
        {terminalTabs.map((t) => (
          <button key={t.name} className="flex items-center">
            <span className="flex gap-[2px] px-[10px]">
              {t.name}
              {t.count && <span className="pt-[6px] text-[10px] leading-[12px] text-[#ff0000]">{t.count}</span>}
            </span>
            <span className="h-[13px] w-px bg-[#606060]" />
          </button>
        ))}
      </div>
      <div className="h-[3px] border-t border-white" />
    </div>
  </section>
);

const StatusBar = () => (
  <footer className="flex h-[24px] items-center border-t border-[#a0a0a0] pt-[3px] text-[11px] leading-[18px] shadow-[inset_0_1px_#fff]">
    <p className="flex-1 pl-[3px]">Trading orders page</p>
    <div className="flex h-[18px] w-[117px] border-l border-[#a0a0a0] pl-[5px]">Default</div>
    <div className="h-[18px] w-[101px] border-l border-[#a0a0a0]" />
    <div className="h-[18px] w-[71px] border-l border-[#a0a0a0]" />
    <div className="h-[18px] w-[71px] border-l border-[#a0a0a0]" />
    <div className="h-[18px] w-[68px] border-l border-[#a0a0a0]" />
    <div className="h-[18px] w-[70px] border-l border-[#a0a0a0]" />
    <div className="h-[18px] w-[66px] border-l border-[#a0a0a0]" />
    <div className="flex h-[18px] w-[130px] items-center gap-[4px] border-l border-[#a0a0a0] pl-[5px]">
      <svg width="24" height="13" viewBox="0 0 24 13" aria-hidden="true">
        {[0, 1, 2, 3, 4, 5, 6, 7].map((i) => (
          <g key={i}>
            <rect x={i * 3} y="0" width="2" height={9 - i} fill="#4d8020" />
            <rect x={i * 3} y={10 - i} width="2" height={3 + i} fill="#a01f10" />
          </g>
        ))}
      </svg>
      22619/109 kb
    </div>
  </footer>
);

/* ---------- windows taskbar ---------- */

const ChromeIcon = ({ children }: { children?: React.ReactNode }) => (
  <Icon size={28} box={28}>
    <circle cx="14" cy="14" r="12" fill="#fbc116" />
    <path d="M3.600 8A12 12 0 0014 26l5.200-9-5.200-3z" fill="#229a48" />
    <path d="M3.600 8A12 12 0 0124.400 8H14v6l-5.200 3z" fill="#e33b2e" />
    <circle cx="14" cy="14" r="6" fill="#fff" />
    <circle cx="14" cy="14" r="4.600" fill="#2f76e8" />
    {children}
  </Icon>
);

const TelegramIcon = ({ children }: { children?: React.ReactNode }) => (
  <Icon size={28} box={28}>
    <circle cx="14" cy="14" r="11" fill="#2aa1dd" />
    <path d="M7.500 14l12-5-2 11-4-3-2 2-.5-3.500z" fill="#fff" />
    <path d="M11 15.500l6-4.500-4.500 5.500-1 2.500z" fill="#bfe0f2" />
    {children}
  </Icon>
);

type Task = { label: string; icon: React.ReactNode; open?: boolean; active?: boolean };

const tasks: Task[] = [
  {
    label: "Edge",
    icon: (
      <Icon size={26} box={26}>
        <circle cx="13" cy="13" r="12" fill="#1473c8" />
        <path d="M1.500 10C3 2 12-1 19 2.500c6 3 7.500 9 5 12.500-2 3-6 3-8 1.500 2-4-1-7.500-5-7.500-4 0-7.500 0-9.500 1z" fill="#3ecb8a" />
        <path d="M1.500 10C4 4 12 3 16 8l-4 .5c-5 2.500-5 12.500 3 15.500C5 27 0 18 1.500 10z" fill="#2aa8e0" />
        <path d="M11 12c-3 6 3 11 10 8-3 5-9 6-13 3-3-4-1-9 3-11z" fill="#0c4f9a" />
      </Icon>
    ),
  },
  {
    label: "File Explorer", open: true,
    icon: (
      <Icon size={24} box={24}>
        <path d="M1 3h8l2 3h12v15H1z" fill="#e8a92b" />
        <path d="M1 8h22v13H1z" fill="#fcd667" />
        <path d="M5 14h14v8h-3v-4H8v4H5z" fill="#3e8fe0" />
      </Icon>
    ),
  },
  { label: "Telegram", open: true, icon: <TelegramIcon /> },
  {
    label: "Telegram work", open: true,
    icon: (
      <TelegramIcon>
        <circle cx="20" cy="20" r="8" fill="#7d8388" />
        <text x="20" y="24" fontSize="10" textAnchor="middle" fill="#fff" fontFamily="Open Sans">28</text>
      </TelegramIcon>
    ),
  },
  {
    label: "PowerPoint", open: true,
    icon: (
      <Icon size={26} box={26}>
        <circle cx="14" cy="13" r="11" fill="#ee6c4d" />
        <path d="M14 2a11 11 0 0111 11H14z" fill="#ff9678" />
        <rect x="1" y="7" width="13" height="13" rx="1" fill="#c43e1c" />
        <text x="4" y="17.500" fontSize="11" fontWeight="bold" fill="#fff" fontFamily="Open Sans">P</text>
      </Icon>
    ),
  },
  {
    label: "Antivirus",
    icon: (
      <Icon size={26} box={26}>
        <circle cx="13" cy="13" r="12" fill="#dd0f1c" />
        <path d="M8 7c2 0 4-.5 5-1.500C14 6.500 16 7 18 7v6c0 4-2.500 6-5 7.500C10.500 19 8 17 8 13z" fill="#fff" />
        <path d="M13 9v5M11 12l2 3 2-3" stroke="#dd0f1c" strokeWidth="1.500" fill="none" />
      </Icon>
    ),
  },
  { label: "Chrome", icon: <ChromeIcon /> },
  {
    label: "Photoshop", open: true,
    icon: (
      <Icon size={24} box={24}>
        <rect x="2" y="2" width="20" height="20" fill="#001d34" stroke="#2fc3f5" strokeWidth="1.600" />
        <text x="6" y="16.500" fontSize="11" fill="#2fc3f5" fontWeight="600" fontFamily="Open Sans">Ps</text>
      </Icon>
    ),
  },
  {
    label: "Chrome profile 1", open: true,
    icon: (
      <ChromeIcon>
        <circle cx="20" cy="20" r="7" fill="#b8a99a" />
        <circle cx="20" cy="19.500" r="3.600" fill="#dcb596" />
        <path d="M15.500 19c-1-6 10-6 9 0-2-2.500-6-2.500-9 0z" fill="#2f2622" />
        <path d="M15 25c1-3 9-3 10 0-2 2-8 2-10 0z" fill="#6b7077" />
      </ChromeIcon>
    ),
  },
  {
    label: "MetaTrader 5", open: true,
    icon: (
      <Icon size={26} box={26}>
        <path d="M12 1l10 4v16l-10 4z" fill="#d99a10" />
        <path d="M4 4l13-1v17L4 21z" fill="#f3b722" />
        <text x="6.500" y="17" fontSize="14" fontWeight="bold" fill="#fff" fontFamily="Open Sans">5</text>
      </Icon>
    ),
  },
  { label: "IC Markets", open: true, icon: <IcLogo size={24} /> },
  {
    label: "MetaEditor", open: true,
    icon: (
      <Icon size={26} box={26}>
        <path d="M1 14L11 3l14 9-10 11z" fill="#f7edc4" stroke="#b28a2c" />
        <path d="M1 14l1 3 13 8 10-10v-3L15 23z" fill="#d29c25" stroke="#8a6111" strokeWidth=".7" />
        <path d="M8 8c2-2 8-1 10 2l-4 6c-1-3-5-3-6-8z" fill="#2c7d68" />
        <path d="M9 9l7 3M13 8l-1 5" stroke="#e9c243" strokeWidth="1.500" />
      </Icon>
    ),
  },
  { label: "IC Markets terminal", open: true, active: true, icon: <IcLogo size={24} /> },
  {
    label: "MetaTrader", open: true,
    icon: (
      <Icon size={24} box={24}>
        <path d="M6 13c-1-4 2-8 6-8s7 4 6 8z" fill="#5ea653" />
        <path d="M1.500 21c-1-4 1-10 5-10s6 6 5 10c-2 2-8 2-10 0z" fill="#e7c465" />
        <path d="M12.500 21c-1-4 1-10 5-10s6 6 5 10c-2 2-8 2-10 0z" fill="#3a92d6" />
        <path d="M9.500 5c0-5 5-5 5 0z" fill="#9cc96f" />
        <circle cx="12" cy="13.500" r="4.600" fill="#fff" stroke="#e0a030" />
        <text x="9.500" y="16.500" fontSize="9" fontWeight="bold" fill="#e0701a" fontFamily="Open Sans">5</text>
      </Icon>
    ),
  },
  {
    label: "Chrome profile 2", open: true,
    icon: (
      <ChromeIcon>
        <circle cx="20" cy="20" r="7" fill="#c5e6b8" />
        <circle cx="20" cy="17.500" r="2.500" fill="#2d7a2d" />
        <path d="M15.500 24c0-4 9-4 9 0z" fill="#2d7a2d" />
      </ChromeIcon>
    ),
  },
  {
    label: "Chrome profile 3", open: true,
    icon: (
      <ChromeIcon>
        <circle cx="20" cy="20" r="7" fill="#e83e7e" />
        <text x="20" y="23" fontSize="8" textAnchor="middle" fill="#fff" fontFamily="Open Sans">s</text>
      </ChromeIcon>
    ),
  },
];

const Taskbar = () => (
  <div className="flex h-[40px] items-stretch bg-[linear-gradient(90deg,#26363f,#24343b_50%,#22303a_68%,#2a2c2c_74%,#1f2b32_80%,#1c2b33)] text-white">
    <button aria-label="Start" className="flex w-[48px] items-center justify-center">
      <Icon><path d="M0 2.300l6.500-.9v6.200H0zM7.300 1.300L16 0v7.600H7.300zM0 8.400h6.500v6.200L0 13.700zM7.300 8.400H16V16l-8.700-1.300z" fill="#fff" /></Icon>
    </button>
    <button aria-label="Search Windows" className="flex w-[48px] items-center justify-center">
      <Icon size={18} box={18}><circle cx="11" cy="6.500" r="5" fill="none" stroke="#fff" strokeWidth="1.400" /><path d="M7.500 10.500L1.500 16.500" stroke="#fff" strokeWidth="1.400" /></Icon>
    </button>
    <button aria-label="Task View" className="mr-[2px] flex w-[48px] items-center justify-center">
      <Icon size={17} box={17}>
        <path d="M1.500 1v2.500h9V1M1.500 16v-2.500h9V16M1.500 5.500h9v6h-9zM14.500 1v15" fill="none" stroke="#fff" strokeWidth="1.200" />
        <path d="M13 5h3v3h-3z" fill="#fff" />
      </Icon>
    </button>
    {tasks.map((t) => (
      <button
        key={t.label}
        aria-label={t.label}
        className={clsx("relative flex w-[49px] items-center justify-center", t.active && "bg-[#4f5c63]")}
      >
        {t.icon}
        {t.open && <span className={clsx("absolute bottom-0 h-[2px] bg-[#76b9ed]", t.active ? "inset-x-0" : "inset-x-[4px]")} />}
      </button>
    ))}
    <div className="ml-auto flex items-center">
      <button className="mr-[9px] flex items-center gap-[8px] text-[14px] whitespace-pre">
        <Icon size={24} box={24}>
          <circle cx="12" cy="12" r="10" fill="#f9a51a" />
          <path d="M5 7h13M3 12h14M7 16h16M1 20h15" stroke="#ffe6a8" strokeWidth="1.600" />
          <circle cx="21" cy="4" r="2.500" fill="#d8301f" />
        </Icon>
        42°F  Haze
      </button>
      <button aria-label="Hidden icons" className="flex w-[25px] justify-center"><Icon size={12} box={12}><path d="M1 9l5-5 5 5" fill="none" stroke="#fff" strokeWidth="1.300" /></Icon></button>
      <button aria-label="Meet Now" className="flex w-[25px] justify-center">
        <Icon><rect x="3.500" y="4.500" width="7" height="7" rx="1" fill="none" stroke="#fff" /><path d="M10.500 7l3-1.500v5L10.500 9M5 1.500c2-1 4-1 6 0M5 14.500c2 1 4 1 6 0" fill="none" stroke="#fff" /></Icon>
      </button>
      <button aria-label="Network" className="flex w-[25px] justify-center">
        <Icon><path d="M2 14A12 12 0 0114 2M5 14a9 9 0 019-9M8 14a6 6 0 016-6M11 14a3 3 0 013-3" fill="none" stroke="#fff" strokeWidth="1.100" /><circle cx="13.300" cy="13.300" r="1.200" fill="#fff" /></Icon>
      </button>
      <button aria-label="Volume" className="flex w-[25px] justify-center">
        <Icon size={17} box={17}><path d="M1 6h2.500L7 3v11l-3.500-3H1z" fill="none" stroke="#fff" /><path d="M9 6.500c1 1 1 3 0 4M11 4.500c2.200 2 2.200 6 0 8M13 2.500c3.500 3 3.500 9 0 12" fill="none" stroke="#fff" /></Icon>
      </button>
      <button className="w-[28px] text-[12px]">ENG</button>
      <button className="w-[74px] text-center text-[12px] leading-[18px]">11:49 AM<br />1/20/2023</button>
      <button aria-label="Notifications" className="flex w-[40px] justify-center">
        <svg width="28" height="28" viewBox="0 0 28 28" aria-hidden="true">
          <path d="M1 4h16v12H6l-3 3v-3H1z" fill="#fff" />
          <path d="M4 7.500h10M4 10.500h10" stroke="#1f2d34" strokeWidth="1.300" />
          <circle cx="17" cy="19" r="8.500" fill="#4b5458" stroke="#aeb4b7" />
          <text x="17" y="23" fontSize="11" fontWeight="600" textAnchor="middle" fill="#fff" fontFamily="Open Sans">25</text>
        </svg>
      </button>
      <span className="mr-[4px] ml-[3px] w-px self-stretch bg-[#6b757a]" />
    </div>
  </div>
);

export default function App() {
  return (
    <div className={clsx("flex min-h-screen flex-col bg-white pr-[10px] pb-[6px] text-black", UI)}>
      <TitleBar />
      <div className="flex flex-1 flex-col bg-[#f0f0f0]">
        <MenuBar />
        <Toolbars />
        <main className="flex">
          <Navigator />
          <div className="flex min-w-0 flex-1 flex-col pr-[2px]">
            <Chart />
            <ChartTabs />
          </div>
        </main>
        <Terminal />
        <StatusBar />
      </div>
      <Taskbar />
    </div>
  );
}
